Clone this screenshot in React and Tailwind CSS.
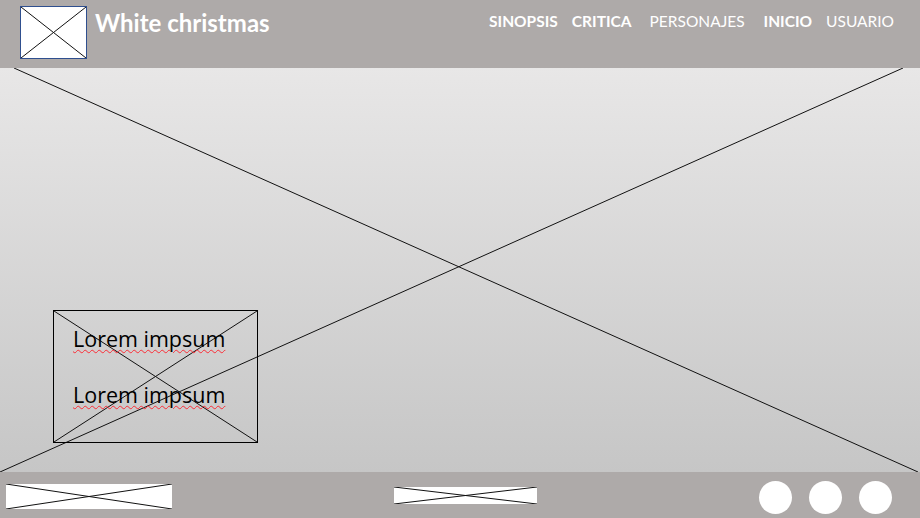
import React from 'react';

const Cross = ({ className = '' }) => (
  <svg className={`absolute inset-0 w-full h-full ${className}`} preserveAspectRatio="none" viewBox="0 0 100 100">
    <line x1="0" y1="0" x2="100" y2="100" stroke="#111" strokeWidth="1" vectorEffect="non-scaling-stroke" />
    <line x1="100" y1="0" x2="0" y2="100" stroke="#111" strokeWidth="1" vectorEffect="non-scaling-stroke" />
  </svg>
);

const Placeholder = ({ className }) => (
  <div className={`relative bg-white ${className}`}>
    <Cross />
  </div>
);

const navItems = [
  { label: 'SINOPSIS', bold: true },
  { label: 'CRITICA', bold: true },
  { label: 'PERSONAJES', bold: false },
  { label: 'INICIO', bold: true },
  { label: 'USUARIO', bold: false },
];

export default function App() {
  return (
    <div className="w-[920px] h-[518px] flex flex-col overflow-hidden font-['Lato','Open_Sans',sans-serif]">
      <header className="h-[68px] bg-[#aeaaa9] flex items-start shrink-0">
        <Placeholder className="w-[67px] h-[53px] ml-[20px] mt-[6px] border border-[#2f4f8f]" />
        <h1 className="ml-[8px] mt-[9px] text-white font-bold text-[24px] leading-[28px]">White christmas</h1>
        <nav className="ml-auto mr-[26px] mt-[11px] flex items-center text-white text-[15.5px] leading-[20px]">
          {navItems.map((item, i) => (
            <a
              key={item.label}
              className={`${item.bold ? 'font-bold' : 'font-normal'} ${i === 0 ? '' : i === 2 ? 'ml-[18px]' : i === 3 ? 'ml-[19px]' : 'ml-[14px]'}`}
            >
              {item.label}
            </a>
          ))}
        </nav>
      </header>

      <main className="relative flex-1 bg-gradient-to-b from-[#e8e7e7] to-[#c6c6c6]">
        <svg className="absolute inset-0 w-full h-full" viewBox="0 0 920 404" preserveAspectRatio="none">
          <line x1="14" y1="0" x2="918" y2="404" stroke="#111" strokeWidth="1" />
          <line x1="903" y1="0" x2="0" y2="404" stroke="#111" strokeWidth="1" />
        </svg>
        <div className="relative ml-[53px] mt-[242px] w-[205px] h-[133px] border border-black">
          <Cross />
          <div className="relative pl-[19px] pt-[14px] flex flex-col gap-[28px] text-black text-[21.5px] leading-[28px] font-['Open_Sans',sans-serif]">
            <span className="underline decoration-wavy decoration-red-500 decoration-1 underline-offset-2">Lorem impsum</span>
            <span className="underline decoration-wavy decoration-red-500 decoration-1 underline-offset-2">Lorem impsum</span>
          </div>
        </div>
      </main>

      <footer className="h-[46px] bg-[#aeaaa9] flex items-center shrink-0">
        <Placeholder className="w-[166px] h-[25px] ml-[6px] mt-[2px]" />
        <Placeholder className="w-[143px] h-[17px] ml-[222px]" />
        <div className="ml-auto mr-[28px] mt-[4px] flex gap-[17px]">
          <span className="w-[33px] h-[33px] rounded-full bg-white" />
          <span className="w-[33px] h-[33px] rounded-full bg-white" />
          <span className="w-[33px] h-[33px] rounded-full bg-white" />
        </div>
      </footer>
    </div>
  );
}
